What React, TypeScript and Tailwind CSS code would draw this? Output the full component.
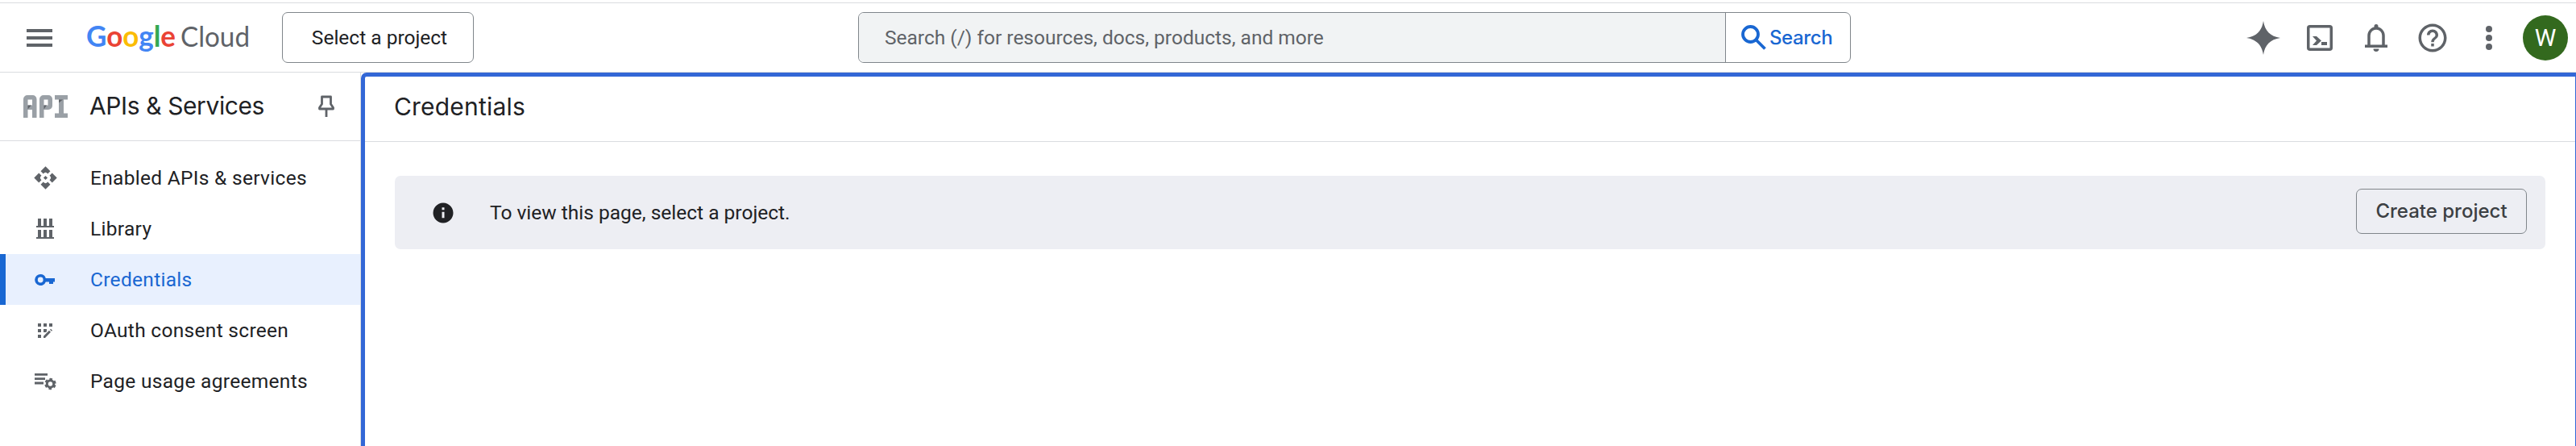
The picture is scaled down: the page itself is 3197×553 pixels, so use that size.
import React from "react";

const NAV_TEXT = "font-[Roboto] text-[24.5px] pt-[2px] tracking-[0.3px]";

function HeaderIcon({ children }: { children: React.ReactNode }) {
  return (
    <span className="flex h-[70px] w-[70px] items-center justify-center text-[#5f6368]">{children}</span>
  );
}

function Mat({ d, size = 42 }: { d: string; size?: number }) {
  return (
    <svg width={size} height={size} viewBox="0 0 24 24" fill="currentColor" className="shrink-0">
      <path fillRule="evenodd" d={d} />
    </svg>
  );
}

function ApiGlyph() {
  return (
    <svg width="55" height="28" viewBox="0 0 55 28" className="shrink-0">
      <path
        fill="#9aa0a6"
        fillRule="evenodd"
        d="M0 28V5a5 5 0 0 1 5-5h6.500a5 5 0 0 1 5 5v23h-5.500v-10H5.500v10zM5.500 5.500v7H11v-7zM20 28V5a5 5 0 0 1 5-5h6a5 5 0 0 1 5 5v8a5 5 0 0 1-5 5h-5.500v10zM25.500 5.500v7h5v-7zM39 0h16v5.500h-5v17h5V28H39v-5.500h5v-17h-5z"
      />
      <path fill="#5f6368" d="M5.500 12.500h4.500l-4.500 5zM25.500 12.500h3.500l-3.500 5zM44 5.500h5l-5 4z" />
    </svg>
  );
}

const API_D =
  "M14 12l-2 2-2-2 2-2 2 2zM9.880 8.120L7.380 5.620 12 1l4.620 4.620-2.500 2.500Q12 5.600 9.880 8.120zM8.120 9.880L5.620 7.380 1 12l4.620 4.620 2.500-2.500Q5.600 12 8.120 9.880zM15.880 9.880l2.500-2.500L23 12l-4.620 4.620-2.500-2.500Q18.400 12 15.880 9.880zM9.880 15.880l-2.500 2.500L12 23l4.620-4.620-2.500-2.500Q12 18.400 9.880 15.880z";

const items = [
  {
    label: "Enabled APIs & services",
    icon: <Mat d={API_D} size={31} />,
  },
  {
    label: "Library",
    icon: (
      <svg width="22" height="26" viewBox="0 0 22 26" fill="currentColor">
        <path d="M2 0h4v9h3V0h4v9h3V0h4v9h2v2H0V9h2zM2 14h4v9h3v-9h4v9h3v-9h4v9h2v2H0v-2h2z" />
      </svg>
    ),
  },
  {
    label: "Credentials",
    active: true,
    icon: (
      <svg width="26" height="16" viewBox="0 0 26 16" fill="currentColor">
        <path
          fillRule="evenodd"
          d="M7.200 1a7 7 0 1 0 6.600 9.400H18V13h5v-2.600h2V6H13.800A7 7 0 0 0 7.200 1zm0 3.600a3.400 3.400 0 1 1 0 6.800 3.400 3.400 0 0 1 0-6.800z"
        />
      </svg>
    ),
  },
  {
    label: "OAuth consent screen",
    icon: (
      <svg width="20" height="20" viewBox="0 0 20 20" fill="currentColor">
        <path d="M1 1h4v4H1zM8 1h4v4H8zM15 1h4v4h-4zM1 8h4v4H1zM8 8h4v3l-1 1H8zM1 15h4v4H1zM8 16.700l7-7 2 2-7 7.300H8zM16 8.700l1-1 2 2-1 1z" />
      </svg>
    ),
  },
  {
    label: "Page usage agreements",
    icon: (
      <svg width="28" height="22" viewBox="0 0 28 22" fill="currentColor" className="overflow-visible">
        <path d="M1 1h16v2.800H1zM1 6.300h13v2.800H1zM1 11.600h11v2.800H1z" />
        <circle cx="20.500" cy="14" r="4.200" fill="none" stroke="currentColor" strokeWidth="3" />
        <circle cx="20.500" cy="14" r="6" fill="none" stroke="currentColor" strokeWidth="2.400" strokeDasharray="3.500 2.783" strokeDashoffset="-1.400" />
      </svg>
    ),
  },
];

export default function App() {
  return (
    <div className="flex h-[553px] w-[3197px] flex-col overflow-hidden bg-white pt-[3px] font-[Roboto] text-[#202124]">
      <header className="flex h-[87px] shrink-0 items-center border-y border-[#dadce0]">
        <svg width="32" height="22" viewBox="0 0 32 22" className="ml-[33px]" fill="#5f6368">
          <path d="M0 0h32v4H0zM0 9h32v4H0zM0 18h32v4H0z" />
        </svg>
        <svg width="206" height="60" viewBox="0 0 206 60" className="ml-[42px] shrink-0 font-[Lato]">
          <text y="41" fontSize="36" fontWeight="700" textLength="111" lengthAdjust="spacingAndGlyphs">
            <tspan fill="#4285f4">G</tspan>
            <tspan fill="#ea4335">o</tspan>
            <tspan fill="#fbbc04">o</tspan>
            <tspan fill="#4285f4">g</tspan>
            <tspan fill="#34a853">l</tspan>
            <tspan fill="#ea4335">e</tspan>
          </text>
          <text x="117" y="41" fontSize="34" fill="#5f6368" textLength="86" lengthAdjust="spacingAndGlyphs">
            Cloud
          </text>
        </svg>
        <button className="ml-[37px] flex h-[63px] w-[238px] items-center justify-center rounded-[7px] border border-[#80868b] pt-[2px] pl-[4px] text-[24.5px]">
          Select a project
        </button>
        <div className="ml-[477px] flex h-[63px] w-[1232px] items-stretch overflow-hidden rounded-[7px] border border-[#80868b]">
          <div className="flex flex-1 items-center bg-[#f1f3f4] pt-[2px] pl-[32px] text-[24.5px] text-[#5f6368]">
            Search (/) for resources, docs, products, and more
          </div>
          <div className="flex w-[155px] items-center border-l border-[#80868b] pl-[19px] text-[#1967d2]">
            <svg width="31" height="31" viewBox="0 0 31 31" fill="none" stroke="currentColor" strokeWidth="3.800">
              <circle cx="11.500" cy="11.500" r="9.500" />
              <path d="M18 18l11.500 11.500" />
            </svg>
            <span className="ml-[4px] font-[Inter] text-[24px] font-medium tracking-[-0.4px]">Search</span>
          </div>
        </div>
        <div className="ml-[477px] flex items-center">
          <HeaderIcon>
            <Mat d="M12 0c1 7 5 11 12 12-7 1-11 5-12 12-1-7-5-11-12-12C7 11 11 7 12 0z" />
          </HeaderIcon>
          <HeaderIcon>
            <svg width="32" height="32" viewBox="0 0 32 32" fill="currentColor">
              <rect x="1.750" y="1.750" width="28.500" height="28.500" rx="2" fill="none" stroke="currentColor" strokeWidth="3.500" />
              <path d="M7 14h5l6 5.500-6 5.500H7l5-5.500zM18 21h7v4h-7z" />
            </svg>
          </HeaderIcon>
          <HeaderIcon>
            <svg width="28" height="34" viewBox="0 0 28 34" fill="currentColor">
              <path d="M5 27V14a9 9 0 0 1 18 0v13" fill="none" stroke="currentColor" strokeWidth="3.500" />
              <path d="M0 25.500h28V29H0zM11.500 2.500a2.500 2.500 0 0 1 5 0V6h-5zM10.500 30.500h7a3.500 3.500 0 0 1-7 0z" />
            </svg>
          </HeaderIcon>
          <HeaderIcon>
            <Mat d="M11 18h2v-2h-2v2zm1-16C6.480 2 2 6.480 2 12s4.480 10 10 10 10-4.480 10-10S17.520 2 12 2zm0 18c-4.410 0-8-3.590-8-8s3.590-8 8-8 8 3.590 8 8-3.590 8-8 8zm0-14c-2.210 0-4 1.790-4 4h2c0-1.100.9-2 2-2s2 .9 2 2c0 2-3 1.750-3 5h2c0-2.250 3-2.500 3-5 0-2.210-1.790-4-4-4z" />
          </HeaderIcon>
          <HeaderIcon>
            <svg width="8" height="30" viewBox="0 0 8 30" fill="currentColor">
              <circle cx="4" cy="4" r="4" />
              <circle cx="4" cy="15" r="4" />
              <circle cx="4" cy="26" r="4" />
            </svg>
          </HeaderIcon>
          <span className="ml-[7px] flex h-14 w-14 items-center justify-center rounded-full bg-[#33691e] text-[30px] text-white">
            W
          </span>
        </div>
      </header>
      <div className="flex min-h-0 flex-1">
        <aside className="w-[448px] shrink-0 border-r border-[#dadce0]">
          <div className="flex h-[85px] items-center border-b border-[#dadce0] pl-[29px]">
            <ApiGlyph />
            <span className="mb-[2px] ml-[27px] w-[284px] font-[Inter] text-[30px] tracking-[-0.4px] whitespace-nowrap">
              APIs &amp; Services
            </span>
            <svg width="20" height="28" viewBox="0 0 20 28" fill="none" stroke="#5f6368" strokeWidth="2.800">
              <path d="M4.500 2h11v9l3 4.500V17h-17v-1.500l3-4.500zM10 17v10" strokeLinejoin="round" />
            </svg>
          </div>
          <nav className="pt-[14px]">
            {items.map((it) => (
              <a
                key={it.label}
                className={
                  it.active
                    ? "flex h-[63px] items-center border-l-[7px] border-[#1967d2] bg-[#e8f0fe] text-[#1967d2]"
                    : "flex h-[63px] items-center border-l-[7px] border-transparent"
                }
              >
                <span
                  className={
                    it.active
                      ? "ml-[32px] flex w-[34px] justify-center"
                      : "ml-[32px] flex w-[34px] justify-center text-[#5f6368]"
                  }
                >
                  {it.icon}
                </span>
                <span className={`ml-[39px] whitespace-nowrap ${NAV_TEXT}`}>{it.label}</span>
              </a>
            ))}
          </nav>
        </aside>
        <main className="min-w-0 flex-1 rounded-tl-[7px] border-t-[5px] border-r border-l-[5px] border-[#3367d6]">
          <h1 className="flex h-[81px] items-center border-b border-[#dadce0] pb-[6px] pl-[36px] font-[Inter] text-[30px] tracking-[0.2px]">
            Credentials
          </h1>
          <section className="mt-[42px] mr-[37px] ml-[37px] flex h-[91px] items-center rounded-[7px] bg-[#edeef3] pr-[23px] pl-[45px]">
            <Mat
              d="M12 2C6.480 2 2 6.480 2 12s4.480 10 10 10 10-4.480 10-10S17.520 2 12 2zm1.200 15h-2.400v-6h2.400v6zm0-8h-2.400V6.600h2.400V9z"
              size={30}
            />
            <span className="ml-[43px] flex-1 pt-[2px] text-[24.5px]">To view this page, select a project.</span>
            <button className="mb-[4px] flex h-[56px] w-[212px] items-center justify-center rounded-[7px] border border-[#80868b] font-[Inter] text-[24px] font-medium tracking-[0px] text-[#3c4043]">
              Create project
            </button>
          </section>
        </main>
      </div>
    </div>
  );
}
